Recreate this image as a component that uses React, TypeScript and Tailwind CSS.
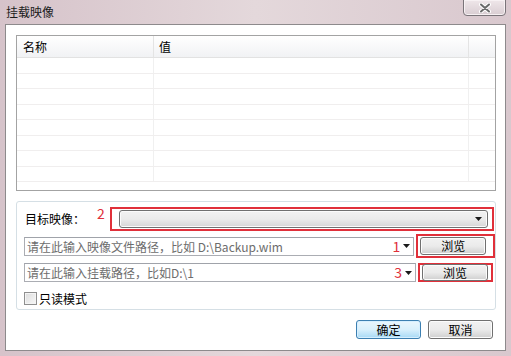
import React from "react";

const font = { fontFamily: '"Noto Sans CJK SC", "Noto Sans", sans-serif' };

function Arrow() {
  return (
    <svg width="7" height="4" viewBox="0 0 7 4" className="shrink-0">
      <path d="M0 0 H7 L3.5 4 Z" fill="#1a1a1a" />
    </svg>
  );
}

function Button({ label, primary }: { label: string; primary?: boolean }) {
  return (
    <div
      className={
        "flex items-center justify-center rounded-[3px] border text-[12px] text-black " +
        (primary
          ? "border-[#3c7fb1] bg-gradient-to-b from-[#eaf6fd] via-[#d9f0fc] to-[#a7d9f5] shadow-[inset_0_0_0_1px_#d6efff]"
          : "border-[#707070] bg-gradient-to-b from-[#f2f2f2] via-[#ebebeb] to-[#cfcfcf] shadow-[inset_0_0_0_1px_#fcfcfc]")
      }
    >
      {label}
    </div>
  );
}

function PathInput({ text, mark }: { text: string; mark: string }) {
  return (
    <div className="flex h-[19px] w-[392px] items-center border border-[#abadb3] border-t-[#a0a3aa] bg-white pl-[2px] pr-[3px]">
      <span className="flex-1 whitespace-nowrap text-[12px] leading-[17px] text-[#6d6d6d]">{text}</span>
      <span className="mr-[3px] text-[14px] leading-[17px] text-[#e0303a]">{mark}</span>
      <Arrow />
    </div>
  );
}

export default function App() {
  return (
    <div
      className="flex h-[356px] w-[511px] flex-col overflow-hidden bg-gradient-to-r from-[#d6c3ca] via-[#e4d8db] to-[#d9c8ce]"
      style={font}
    >
      {/* title bar */}
      <div className="flex h-[24px] shrink-0 items-start justify-between pl-[6px] pr-[5px]">
        <span className="mt-[4px] text-[12px] leading-[15px] text-[#1b1b1b]">挂载映像</span>
        <div className="-mt-px flex h-[17px] w-[43px] items-center justify-center rounded-b-[4px] border border-[#7a7479] bg-gradient-to-b from-[#efe7ea] to-[#d9cdd2] shadow-[inset_0_0_0_1px_#f7f1f3]">
          <svg width="12" height="10" viewBox="0 0 12 10">
            <path d="M2 1.5 L10 8.5 M10 1.5 L2 8.5" stroke="#ffffff" strokeWidth="4" strokeLinecap="round" />
            <path d="M2 1.5 L10 8.5 M10 1.5 L2 8.5" stroke="#6a6a6a" strokeWidth="2" strokeLinecap="round" />
          </svg>
        </div>
      </div>

      {/* client area */}
      <div className="mx-[5px] flex h-[327px] flex-col border border-[#8d8a8c] bg-white px-[10px] pt-[10px]">
        {/* property list */}
        <div className="flex h-[156px] w-[480px] flex-col border border-[#a3a3a3]">
          <div className="flex h-[22px] shrink-0 border-b border-[#e2e2e2] bg-gradient-to-b from-[#ffffff] to-[#f1f2f4] text-[12px] text-black">
            <div className="flex w-[137px] items-center border-r border-[#e4e4e4] pl-[6px]">名称</div>
            <div className="flex w-[315px] items-center border-r border-[#e4e4e4] pl-[5px]">值</div>
            <div className="flex-1" />
          </div>
          <div className="flex-1">
            {Array.from({ length: 8 }).map((_, i) => (
              <div key={i} className="flex h-[15.5px] border-b border-[#f0eeee]">
                <div className="w-[137px] border-r border-[#f0f0f0]" />
                <div className="w-[315px] border-r border-[#f0f0f0]" />
                <div className="flex-1" />
              </div>
            ))}
          </div>
        </div>

        {/* group box */}
        <div className="mt-[10px] flex h-[109px] w-[480px] flex-col rounded-[3px] border border-[#d5dfe5] pl-[7px] pt-[5px]">
          <div className="flex h-[24px] items-center">
            <div className="flex w-[86px] items-center">
              <span className="ml-px text-[12px] text-black">目标映像：</span>
              <span className="-mt-[12px] ml-[12px] text-[14px] leading-none text-[#e0303a]">2</span>
            </div>
            <div className="flex h-[24px] w-[384px] items-center border-2 border-[#e0303a] pl-[7px] pr-[4px]">
              <div className="flex h-[18px] flex-1 items-center justify-end rounded-[3px] border border-[#707070] bg-gradient-to-b from-[#f2f2f2] via-[#ebebeb] to-[#d6d6d6] pr-[5px] shadow-[inset_0_0_0_1px_#fbfbfb]">
                <Arrow />
              </div>
            </div>
          </div>

          <div className="mt-[3px] flex h-[24px] items-center">
            <PathInput text="请在此输入映像文件路径，比如 D:\Backup.wim" mark="1" />
            <div className="ml-[2px] flex h-[24px] w-[79px] items-center border-2 border-[#e0303a] pl-[2px]">
              <div className="h-[18px] w-[66px] [&>div]:h-full">
                <Button label="浏览" />
              </div>
            </div>
          </div>

          <div className="mt-[5px] flex h-[19px] items-center">
            <PathInput text="请在此输入挂载路径，比如D:\1" mark="3" />
            <div className="ml-[2px] flex h-[19px] w-[75px] items-center border-2 border-[#e0303a] pl-[2px]">
              <div className="h-[17px] w-[66px] [&>div]:h-full">
                <Button label="浏览" />
              </div>
            </div>
          </div>

          <div className="mt-[9px] flex items-center">
            <div className="h-[13px] w-[13px] border border-[#8f8f8f] bg-gradient-to-br from-[#dcdcdc] to-[#f8f8f8] shadow-[inset_0_0_0_1px_#f4f4f4]" />
            <span className="ml-[2px] text-[12px] leading-[15px] text-black">只读模式</span>
          </div>
        </div>

        {/* dialog buttons */}
        <div className="mt-[10px] flex justify-end gap-[7px] pr-[2px]">
          <div className="h-[19px] w-[65px] [&>div]:h-full">
            <Button label="确定" primary />
          </div>
          <div className="h-[19px] w-[65px] [&>div]:h-full">
            <Button label="取消" />
          </div>
        </div>
      </div>
    </div>
  );
}
